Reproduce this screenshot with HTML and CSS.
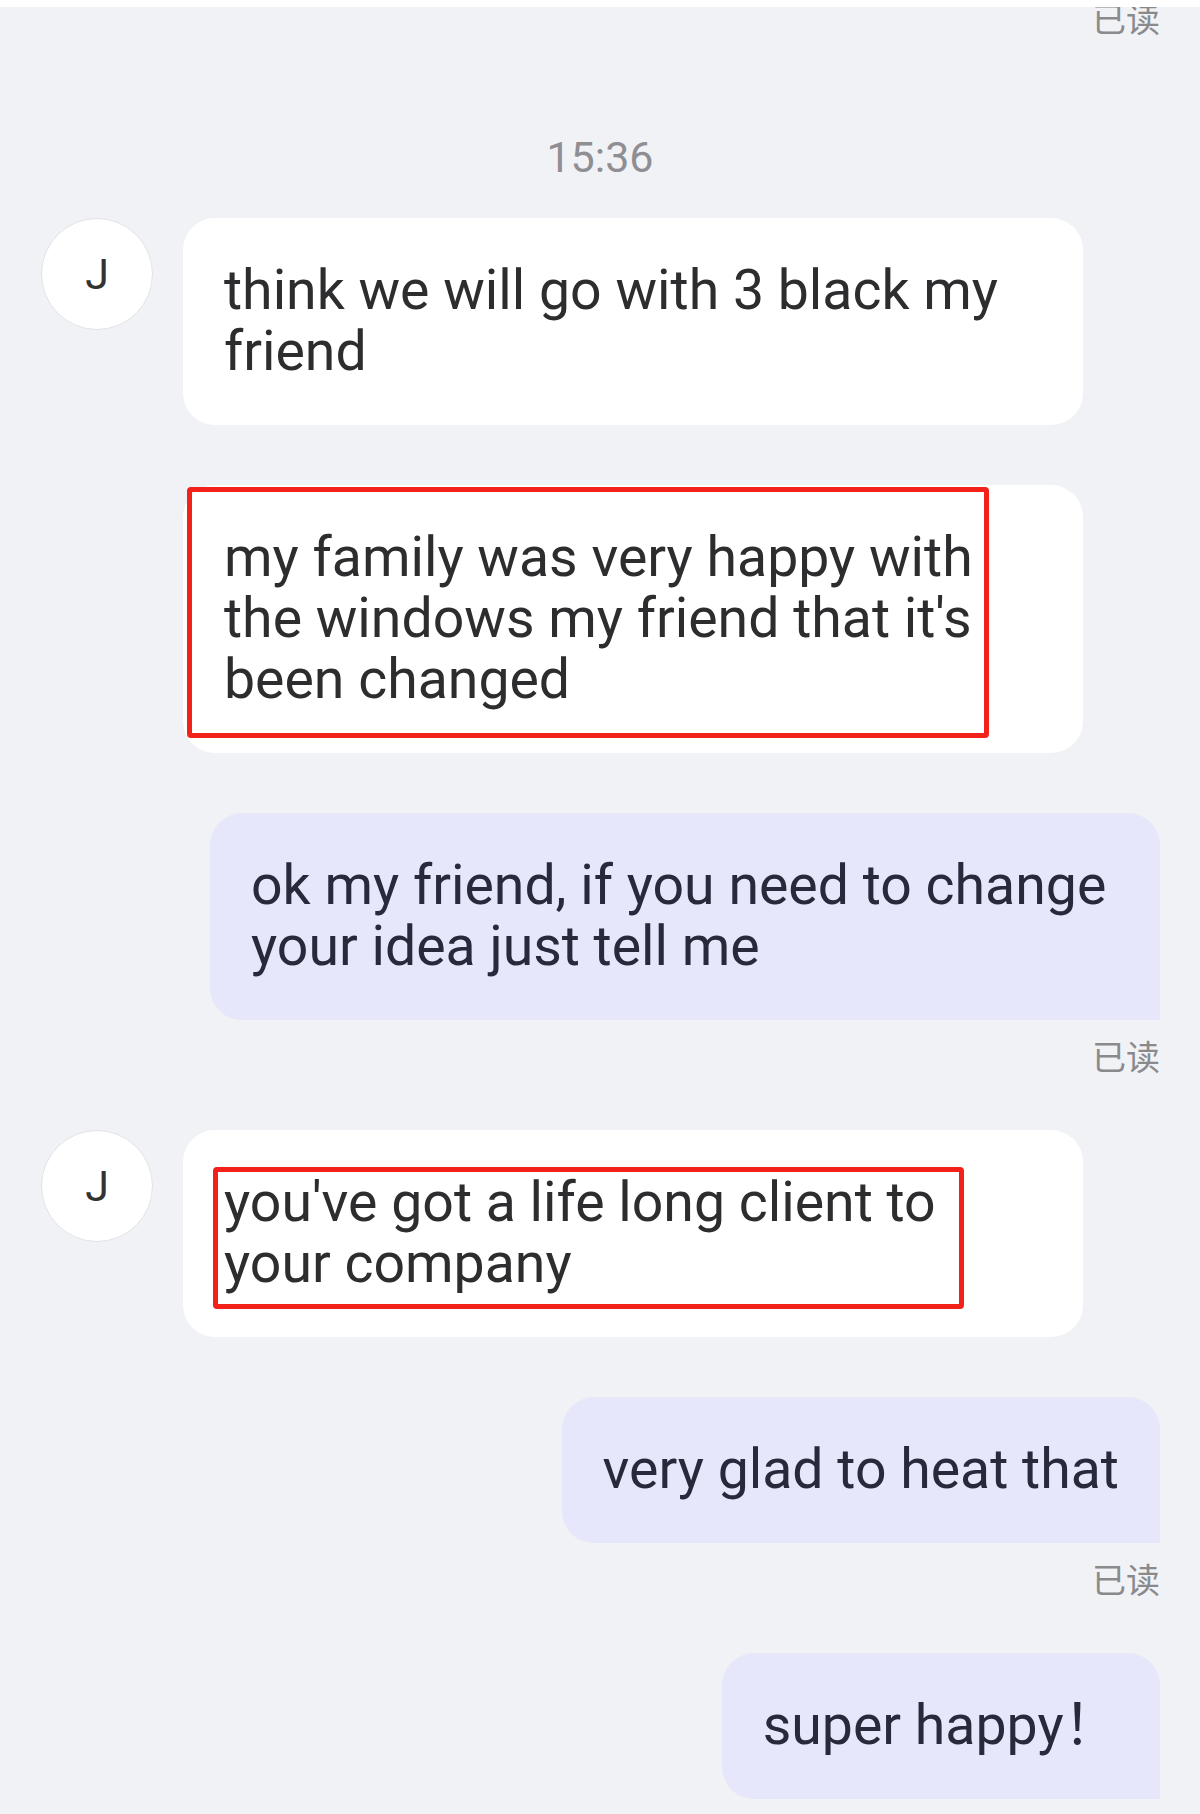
FILE: index.html
```html
<!DOCTYPE html>
<html lang="zh">

<head>
  <meta charset="UTF-8">
  <meta name="viewport" content="width=device-width, initial-scale=1.0">
  <title>Chat</title>
  <link rel="stylesheet" href="styles.css">
</head>

<body>

  <div id="top"></div>

  <div id="chat">
    <div class="read first">已读</div>

    <div class="time">15:36</div>

    <div class="row in">
      <div class="avatar">J</div>
      <div class="bubble">think we will go with 3 black my friend</div>
    </div>

    <div class="row in">
      <div class="avatar blank"></div>
      <div class="bubble">
        my family was very happy with the windows my friend that it's been changed
        <div class="mark mark1"></div>
      </div>
    </div>

    <div class="row out">
      <div class="bubble">ok my friend, if you need to change your idea just tell me</div>
    </div>
    <div class="read">已读</div>

    <div class="row in">
      <div class="avatar">J</div>
      <div class="bubble">
        you've got a life long client to your company
        <div class="mark mark2"></div>
      </div>
    </div>

    <div class="row out">
      <div class="bubble">very glad to heat that</div>
    </div>
    <div class="read">已读</div>

    <div class="row out">
      <div class="bubble">super happy！</div>
    </div>
  </div>

</body>

</html>
```
FILE: styles.css
```css
body {
  margin: 0;
  background-color: #f1f2f6;
  font-family: Roboto, "Noto Sans CJK SC", sans-serif;
  height: 1814px;
  overflow: hidden;
}

#top {
  position: relative;
  z-index: 1;
  height: 7px;
  background-color: #fff;
}

#chat {
  display: flex;
  flex-direction: column;
}

.read {
  margin-top: 19px;
  padding-right: 40px;
  text-align: right;
  font-family: "Noto Sans CJK SC", sans-serif;
  font-size: 34px;
  line-height: 34px;
  color: #8a8a8c;
}

.read.first {
  margin-top: -6px;
}

.time {
  margin-top: 101px;
  text-align: center;
  font-size: 43px;
  line-height: 43px;
  color: #8e8e93;
}

.row {
  display: flex;
  align-items: flex-start;
  margin-top: 60px;
}

.time + .row {
  margin-top: 39px;
}

.read + .row {
  margin-top: 57px;
}

.row.in {
  padding-left: 41px;
  gap: 30px;
}

.row.out {
  justify-content: flex-end;
  padding-right: 40px;
}

.avatar {
  flex: none;
  box-sizing: border-box;
  width: 112px;
  height: 112px;
  border: 1px solid #e2e3e7;
  border-radius: 50%;
  background-color: #fff;
  display: flex;
  align-items: center;
  justify-content: center;
  font-size: 43px;
  color: #333;
}

.avatar.blank {
  visibility: hidden;
}

.bubble {
  position: relative;
  box-sizing: border-box;
  padding: 42px 41px 43px;
  font-size: 55.4px;
  line-height: 61px;
}

.in .bubble {
  max-width: 900px;
  background-color: #fff;
  border-radius: 32px;
  color: #2d2d2f;
}

.out .bubble {
  max-width: 950px;
  background-color: #e6e7fa;
  border-radius: 32px 32px 0 32px;
  color: #272a3a;
}

.mark {
  position: absolute;
  box-sizing: border-box;
  border: 5px solid #f2221b;
  border-radius: 4px;
}

.mark1 {
  left: 4px;
  top: 2px;
  width: 802px;
  height: 251px;
}

.mark2 {
  left: 30px;
  top: 37px;
  width: 751px;
  height: 142px;
}
```
